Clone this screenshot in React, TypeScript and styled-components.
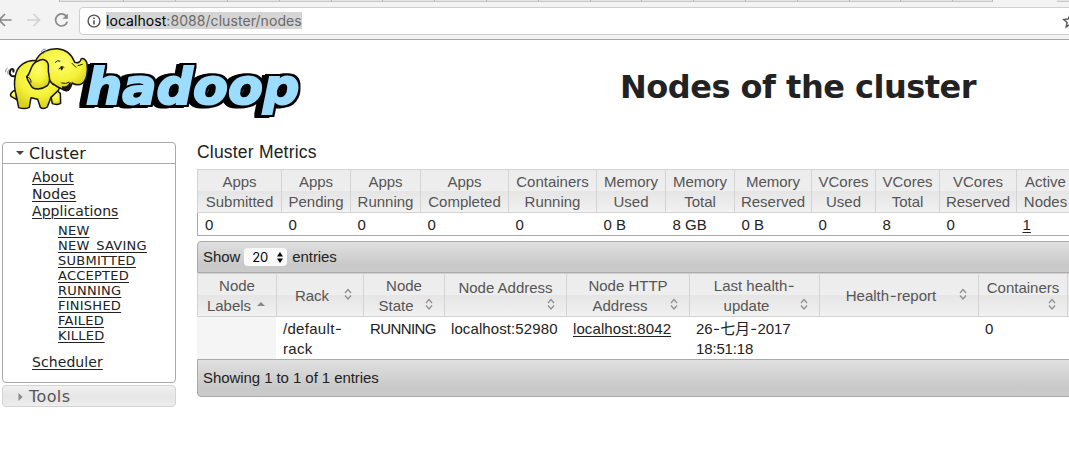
import React from 'react';
import styled, { createGlobalStyle, css } from 'styled-components';

const Global = createGlobalStyle`
  * { box-sizing: border-box; }
  html, body { margin: 0; background: #fff; overflow: hidden; }
`;

const sans = '"Liberation Sans", "Noto Sans CJK SC", sans-serif';
const wide = '"DejaVu Sans", sans-serif';

const Page = styled.div`
  width: 1069px;
  height: 455px;
  overflow: hidden;
  color: #222;
  font-family: ${sans};
  font-size: 15px;
`;

/* Browser chrome */
const TabStrip = styled.div`
  display: flex;
  height: 2px;
  background: #f3f3f3;
`;
const Tab = styled.div<{ $w: number; $active?: boolean }>`
  flex: none;
  width: ${p => p.$w}px;
  background: ${p => (p.$active ? '#f3f3f3' : '#e4e4e4')};
  border-right: 1px solid #b5b5b5;
  border-bottom: ${p => (p.$active ? 'none' : '1px solid #c8c8c8')};
`;
const TabGap = styled.div`
  flex: none;
  width: 64px;
`;
const Toolbar = styled.div`
  display: flex;
  align-items: center;
  height: 38px;
  padding-bottom: 1px;
  background: #f3f3f3;
  border-bottom: 1px solid #a6a6a6;
`;
const NavIcons = styled.svg`
  flex: none;
  width: 79px;
  height: 28px;
`;
const Omnibox = styled.div`
  display: flex;
  align-items: center;
  flex: none;
  width: 1010px;
  height: 28px;
  margin-top: 1px;
  padding-left: 7px;
  border: 1px solid #cfcfcf;
  border-radius: 4px;
  background: #fff;
`;
const InfoIcon = styled.svg`
  width: 14px;
  height: 14px;
  margin-right: 5px;
`;
const Url = styled.span`
  height: 17px;
  line-height: 17px;
  background: #d5d5d5;
  color: #6a6a6a;
  font-family: Inter, sans-serif;
  font-size: 14px;
  letter-spacing: 0.06px;
  b { font-weight: 400; color: #000; }
`;
const Star = styled.svg`
  width: 16px;
  height: 16px;
  margin-left: auto;
  margin-right: 10px;
`;

/* Page header */
const Header = styled.header`
  display: flex;
  height: 102px;
`;
const Logo = styled.svg`
  flex: none;
  width: 310px;
  height: 82px;
`;
const Title = styled.h1`
  margin: 26px 0 0 310px;
  font: bold 32px/42px ${wide};
  letter-spacing: -0.5px;
  white-space: nowrap;
`;

const Main = styled.div`
  display: flex;
  align-items: flex-start;
`;

/* Navigation */
const Sidebar = styled.nav`
  flex: none;
  width: 174px;
  margin: 0 21px 0 2px;
  font-family: ${wide};
`;
const Section = styled.section<{ $h: number; $closed?: boolean }>`
  height: ${p => p.$h}px;
  border: 1px solid ${p => (p.$closed ? '#d3d3d3' : '#aaa')};
  border-radius: 4px;
  margin-bottom: 2px;
  color: ${p => (p.$closed ? '#555' : '#222')};
  letter-spacing: ${p => (p.$closed ? '0.4px' : '0')};
  background: ${p => (p.$closed ? 'linear-gradient(#f0f0f0, #e6e6e6 50%, #ededed)' : '#fff')};
`;
const SectionTitle = styled.div<{ $line?: boolean }>`
  display: flex;
  align-items: center;
  height: 21px;
  padding-left: 13px;
  font-size: 16px;
  border-bottom: ${p => (p.$line ? '1px solid #aaa' : 'none')};
  svg { width: 8px; height: 8px; margin-right: 5px; }
`;
const NavList = styled.ul<{ $sub?: boolean }>`
  list-style: none;
  margin: ${p => (p.$sub ? '3px 0 11px 26px' : '5px 0 0 29px')};
  padding: 0;
  font-size: ${p => (p.$sub ? 13 : 14)}px;
  letter-spacing: ${p => (p.$sub ? 0.25 : 0.08)}px;
  line-height: ${p => (p.$sub ? 15 : 17)}px;
`;
const Link = styled.a`
  color: inherit;
  text-decoration: underline;
  text-underline-offset: 1.5px;
  text-decoration-thickness: 1px;
`;

/* Content */
const Content = styled.main`
  flex: none;
  width: 900px;
`;
const Heading = styled.div`
  height: 27px;
  line-height: 21px;
  font-size: 17.5px;
  letter-spacing: 0.2px;
`;
const headFill = css`
  background: linear-gradient(#ececec, #eeeeee 49%, #e5e5e5 50%, #f1f1f1);
`;
const Row = styled.div<{ $cols: string; $h: number }>`
  display: grid;
  grid-template-columns: ${p => p.$cols};
  height: ${p => p.$h}px;
`;
const HeadCell = styled.div`
  display: flex;
  flex-direction: column;
  justify-content: center;
  padding-top: 2px;
  border: solid #d3d3d3;
  border-width: 1px 0 1px 1px;
  color: #555;
  line-height: 20px;
  text-align: center;
  white-space: nowrap;
  ${headFill}
`;
const MetricsBody = styled.div`
  border: solid #aaa;
  border-width: 0 0 1px 1px;
  margin-bottom: 5px;
`;
const MetricCell = styled.div`
  padding-left: 7px;
  line-height: 24px;
`;
const Bar = styled.div<{ $h: number; $bottom?: boolean }>`
  display: flex;
  align-items: center;
  height: ${p => p.$h}px;
  padding: 0 0 2px 5px;
  letter-spacing: -0.07px;
  border: 1px solid #aaa;
  border-radius: ${p => (p.$bottom ? '0 0 0 4px' : '4px 0 0 0')};
  background: linear-gradient(#e0e0e0, #c9c9c9 75%, #cbcbcb);
`;
const Select = styled.span`
  display: flex;
  align-items: center;
  justify-content: space-between;
  width: 43px;
  height: 18px;
  margin: 2px 5px 0 4px;
  padding: 0 4px 0 8px;
  border-radius: 4px;
  background: #fafafa;
  color: #000;
  font: 13px Inter, sans-serif;
  svg { width: 6px; height: 11px; }
`;
const HeadLine = styled.div<{ $iconOnly?: boolean }>`
  display: flex;
  align-items: center;
  height: ${p => (p.$iconOnly ? 16 : 20)}px;
  padding-right: 11px;
  span { flex: 1; padding-left: 3px; }
`;
const PlainLine = styled.div`
  padding-right: 0;
`;
const SortSvg = styled.svg`
  flex: none;
  width: 8px;
  height: 12px;
  margin-top: -4px;
`;
const Cell = styled.div<{ $sorted?: boolean; $tight?: number }>`
  padding: 2px 0 0 7px;
  line-height: 20px;
  letter-spacing: ${p => p.$tight ?? 0.1}px;
  white-space: pre-line;
  background: ${p => (p.$sorted ? '#f5f5f5' : '#fff')};
`;
const Dash = styled.span`
  && { font-family: Inter, sans-serif; padding: 0 0.5px; }
`;

const Sort = ({ asc }: { asc?: boolean }) => (
  <SortSvg viewBox="0 0 8 12">
    {asc ? (
      <path d="M0 8 4 4l4 4z" fill="#888" />
    ) : (
      <path d="M1 5 4 1.6 7 5M1 7.5 4 10.9 7 7.5" fill="none" stroke="#909090" strokeWidth="1.3" />
    )}
  </SortSvg>
);

const metrics: [string, string, string][] = [
  ['Apps', 'Submitted', '0'],
  ['Apps', 'Pending', '0'],
  ['Apps', 'Running', '0'],
  ['Apps', 'Completed', '0'],
  ['Containers', 'Running', '0'],
  ['Memory', 'Used', '0 B'],
  ['Memory', 'Total', '8 GB'],
  ['Memory', 'Reserved', '0 B'],
  ['VCores', 'Used', '0'],
  ['VCores', 'Total', '8'],
  ['VCores', 'Reserved', '0'],
  ['Active', 'Nodes', '1'],
];
const metricCols = '84px 69px 70px 88px 88px 69px 69px 77px 64px 64px 77px 58px';
const bodyCols = '83.5px 69px 70px 88px 88px 69px 69px 77px 64px 64px 76px 58px';
const nodeCols = '79px 87px 81px 122px 123px 130px 159px 89px 60px';
const states = ['NEW', 'NEW_SAVING', 'SUBMITTED', 'ACCEPTED', 'RUNNING', 'FINISHED', 'FAILED', 'KILLED'];

const nodeHeads: { top?: React.ReactNode; last?: React.ReactNode; asc?: boolean }[] = [
  { top: 'Node', last: 'Labels', asc: true },
  { last: 'Rack' },
  { top: 'Node', last: 'State' },
  { top: 'Node Address' },
  { top: 'Node HTTP', last: 'Address' },
  { top: <>Last health<Dash>-</Dash></>, last: 'update' },
  { last: <>Health<Dash>-</Dash>report</> },
  { top: 'Containers' },
];

const HadoopLogo = () => (
  <Logo viewBox="0 120 930 246">
    <defs>
      <radialGradient id="skin" cx="0.5" cy="0.35" r="0.65">
        <stop offset="0" stopColor="#ffff70" />
        <stop offset="0.6" stopColor="#f5f238" />
        <stop offset="1" stopColor="#d6ce20" />
      </radialGradient>
      <filter id="extrude" x="-10%" y="-20%" width="120%" height="140%" colorInterpolationFilters="sRGB">
        <feMorphology in="SourceAlpha" operator="dilate" radius="5" result="edge" />
        <feOffset in="edge" dx="-7" dy="1" result="mid" />
        <feOffset in="edge" dx="-14" dy="2" result="far" />
        <feMerge>
          <feMergeNode in="far" />
          <feMergeNode in="mid" />
          <feMergeNode in="edge" />
          <feMergeNode in="SourceGraphic" />
        </feMerge>
      </filter>
    </defs>
    <text
      x="258"
      y="313"
      textLength="640"
      lengthAdjust="spacingAndGlyphs"
      fontFamily="DejaVu Sans"
      fontWeight="bold"
      fontStyle="italic"
      fontSize="150"
      fill="#9bdcff"
      stroke="#9bdcff"
      strokeWidth="6"
      strokeLinejoin="miter"
      filter="url(#extrude)"
    >
      hadoop
    </text>
    <g fill="url(#skin)" stroke="#161616" strokeWidth="4.5" strokeLinejoin="round" strokeLinecap="round">
      <path d="M46 228C34 232 26 222 31 211C35 204 43 208 40 215" fill="none" strokeWidth="6" />
      <path d="M48 270C38 272 28 282 33 289L50 299Z" />
      <path d="M153 292L157 311Q170 316 182 310L181 280L168 270Z" />
      <path d="M110 182C80 178 51 196 46 228C42 246 44 270 49 287L56 323Q73 329 88 322L93 293L113 298L121 322Q130 330 142 321L153 292L176 270L186 244L150 190Z" />
      <path d="M107 184C116 158 145 145 172 146C199 148 216 164 224 187C233 190 242 187 244 176C250 173 258 180 261 190C265 214 260 240 247 250C237 257 225 254 216 249C213 264 205 275 192 270C181 263 175 264 166 256Q148 250 143 222Z" />
      <path d="M188 261Q202 264 210 249Q213 273 198 272Q189 270 188 261Z" fill="#171717" />
      <path d="M112 184C133 170 148 185 145 206C144 228 156 240 142 257C126 269 102 271 94 259C90 249 82 243 80 230C94 219 90 191 112 184Z" />
      <path d="M166 187Q172 179 180 183M177 207Q183 195 192 202M234 197L247 193M216 190L228 202M185 249Q198 253 207 247M80 230Q94 233 93 247" fill="none" strokeWidth="3" />
      <ellipse cx="185" cy="205" rx="2.500" ry="5" fill="#111" strokeWidth="2" />
      <path d="M17 216Q15 207 22 204M24 223Q22 214 25 210M124 155Q126 148 136 147M130 161Q133 156 139 154" fill="none" stroke="#888" strokeWidth="3" />
    </g>
  </Logo>
);

export default function App() {
  return (
    <Page>
      <Global />
      <TabStrip>
        <Tab $w={60} $active />
        <Tab $w={64} />
        {Array.from({ length: 17 }, (_, i) => (
          <Tab key={i} $w={i === 16 ? 40 : 52 - (i % 5 === 4 ? 1 : 0)} />
        ))}
        <TabGap />
        <Tab $w={60} />
      </TabStrip>
      <Toolbar>
        <NavIcons viewBox="0 0 79 28" fill="none" strokeWidth="1.7">
          <path d="M-1 14H11.500M5 8L-1 14L5 20" stroke="#898989" />
          <path d="M27 14H39M33.500 8L39.500 14L33.500 20" stroke="#d2d2d2" />
          <path d="M66.500 10.500A6 6 0 1 0 67.300 15.800" stroke="#898989" />
          <path d="M67.900 7.500V12.700H62.400Z" fill="#898989" />
        </NavIcons>
        <Omnibox>
          <InfoIcon viewBox="0 0 14 14" fill="none" stroke="#555" strokeWidth="1.4">
            <circle cx="7" cy="7" r="5.900" />
            <path d="M7 6.300V10.500M7 3.500V5" strokeWidth="1.600" />
          </InfoIcon>
          <Url><b>localhost</b>:8088/cluster/nodes</Url>
          <Star viewBox="0 0 16 16" fill="none" stroke="#5c5c5c" strokeWidth="1.5">
            <path d="M8 2l1.800 4.100 4.400.4-3.300 3 .9 4.400L8 11.600l-3.800 2.300.9-4.400-3.300-3 4.400-.4z" />
          </Star>
        </Omnibox>
      </Toolbar>

      <Header>
        <HadoopLogo />
        <Title>Nodes of the cluster</Title>
      </Header>

      <Main>
        <Sidebar>
          <Section $h={241}>
            <SectionTitle $line>
              <svg viewBox="0 0 8 8"><path d="M0 2h8L4 6z" fill="#444" /></svg>
              Cluster
            </SectionTitle>
            <NavList>
              <li><Link>About</Link></li>
              <li><Link>Nodes</Link></li>
              <li><Link>Applications</Link>
                <NavList $sub>
                  {states.map(s => <li key={s}><Link>{s}</Link></li>)}
                </NavList>
              </li>
              <li><Link>Scheduler</Link></li>
            </NavList>
          </Section>
          <Section $h={22} $closed>
            <SectionTitle>
              <svg viewBox="0 0 8 8"><path d="M2.500 0v8l4-4z" fill="#888" /></svg>
              Tools
            </SectionTitle>
          </Section>
        </Sidebar>

        <Content>
          <Heading>Cluster Metrics</Heading>
          <Row $cols={metricCols} $h={44}>
            {metrics.map(([a, b], i) => (
              <HeadCell key={i}><div>{a}</div><div>{b}</div></HeadCell>
            ))}
          </Row>
          <MetricsBody>
            <Row $cols={bodyCols} $h={22}>
              {metrics.map(([, , v], i) => (
                <MetricCell key={i}>{i === 11 ? <Link>{v}</Link> : v}</MetricCell>
              ))}
            </Row>
          </MetricsBody>

          <Bar $h={32}>
            Show
            <Select>
              20
              <svg viewBox="0 0 6 11"><path d="M0 4.500 3 0l3 4.500zM0 6.500h6L3 11z" /></svg>
            </Select>
            entries
          </Bar>
          <Row $cols={nodeCols} $h={44}>
            {nodeHeads.map((h, i) => (
              <HeadCell key={i}>
                {h.top && <PlainLine>{h.top}</PlainLine>}
                <HeadLine $iconOnly={!h.last}><span>{h.last}</span><Sort asc={h.asc} /></HeadLine>
              </HeadCell>
            ))}
            <HeadCell />
          </Row>
          <Row $cols={nodeCols} $h={42}>
            <Cell $sorted />
            <Cell $tight={0.3}>/default<Dash>-</Dash>{'\n'}rack</Cell>
            <Cell $tight={-0.6}>RUNNING</Cell>
            <Cell>localhost:52980</Cell>
            <Cell><Link>localhost:8042</Link></Cell>
            <Cell $tight={-0.15}>26<Dash>-</Dash>七月<Dash>-</Dash>2017{'\n'}18:51:18</Cell>
            <Cell />
            <Cell>0</Cell>
          </Row>
          <Bar $h={38} $bottom>Showing 1 to 1 of 1 entries</Bar>
        </Content>
      </Main>
    </Page>
  );
}
